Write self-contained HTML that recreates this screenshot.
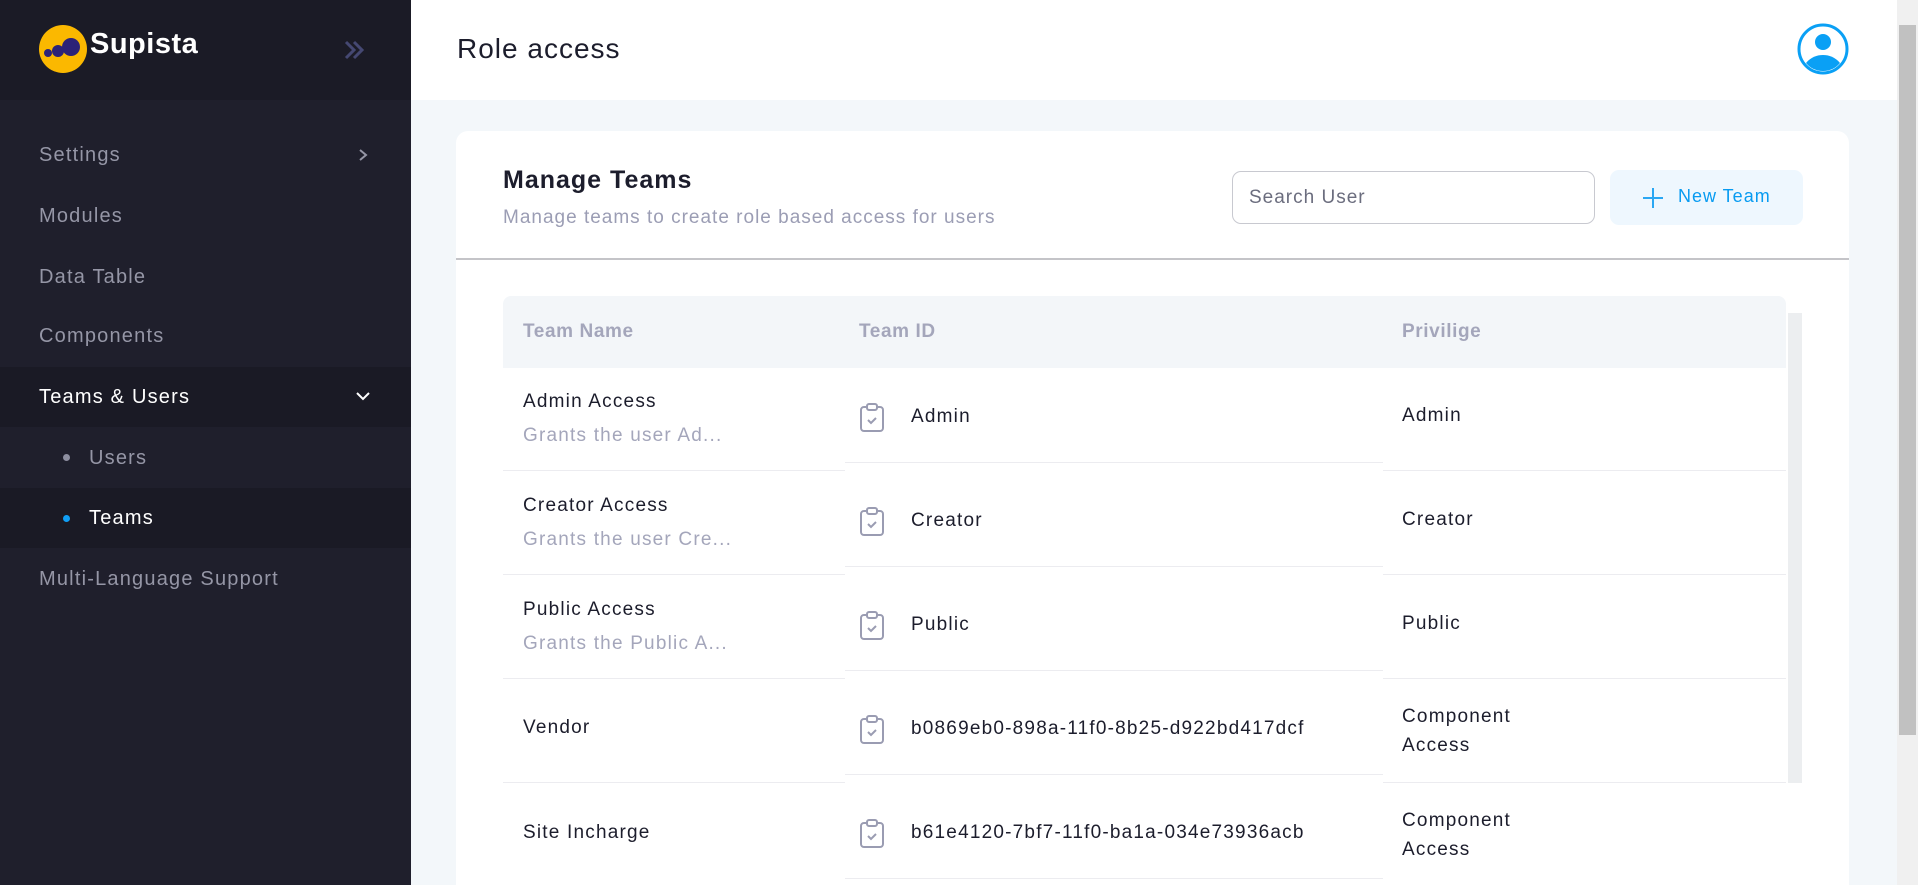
<!DOCTYPE html>
<html><head><meta charset="utf-8"><style>
*{box-sizing:border-box;margin:0;padding:0}
html{overflow:hidden;width:1918px;height:885px}
body{width:1918px;height:885px;overflow:hidden;font-family:"Liberation Sans",sans-serif;background:#f3f7fa;position:relative}
.sb{position:absolute;left:0;top:0;width:411px;height:885px;background:#1f1f2c}
.sbtop{position:absolute;left:0;top:0;width:411px;height:100px;background:#1b1b26}
.logo{position:absolute;left:39px;top:25px;width:48px;height:48px;border-radius:50%;background:#fbb800}
.brand{position:absolute;left:90px;top:28px;color:#fff;font-size:29px;font-weight:bold;letter-spacing:0.5px}
.it{position:absolute;left:39px;font-size:20px;color:#9596a6;letter-spacing:1.2px}
.band{position:absolute;left:0;width:411px;background:#1a1a25}
.main{position:absolute;left:411px;top:0;width:1486px;height:100px;background:#fff}
.card{position:absolute;left:456px;top:131px;width:1393px;height:754px;background:#fff;border-radius:12px 12px 0 0}
.abs{position:absolute}
.hl{position:absolute;height:1px;background:#ececf0}
.tn{position:absolute;font-size:19px;color:#1c1d2c;letter-spacing:1.2px}
.sub{position:absolute;font-size:19px;color:#a4a6bb;letter-spacing:1.2px}
.th{position:absolute;font-size:19px;font-weight:bold;color:#a4a6bb;letter-spacing:0.6px}
.vs{position:absolute;left:1897px;top:0;width:21px;height:885px;background:#f0f0f0}
</style></head><body>
<div class="sb"></div><div class="sbtop"></div>
<div class="logo"><svg width="48" height="48"><circle cx="9" cy="28" r="4" fill="#2c2277"/><circle cx="19" cy="26" r="6" fill="#2c2277"/><circle cx="32" cy="22" r="9" fill="#2c2277"/></svg></div>
<div class="brand">Supista</div>
<svg class="abs" style="left:343px;top:39px" width="22" height="22" viewBox="0 0 22 22"><path d="M3 3l8 8-8 8M11 3l8 8-8 8" stroke="#454872" stroke-width="3" fill="none"/></svg>
<div class="it" style="top:144px">Settings</div>
<svg class="abs" style="left:356px;top:148px" width="14" height="14"><path d="M4 2l6 5-6 5" stroke="#9596a6" stroke-width="2" fill="none"/></svg>
<div class="it" style="top:205px">Modules</div>
<div class="it" style="top:266px">Data Table</div>
<div class="it" style="top:325px">Components</div>
<div class="band" style="top:367px;height:60px"></div>
<div class="it" style="top:386px;color:#fff">Teams &amp; Users</div>
<svg class="abs" style="left:355px;top:389px" width="16" height="14"><path d="M2 4l6 6 6-6" stroke="#fff" stroke-width="2" fill="none"/></svg>
<div class="abs" style="left:63px;top:454px;width:7px;height:7px;border-radius:50%;background:#8d8ea0"></div>
<div class="it" style="top:447px;left:89px">Users</div>
<div class="band" style="top:488px;height:60px"></div>
<div class="abs" style="left:63px;top:515px;width:7px;height:7px;border-radius:50%;background:#109ef5"></div>
<div class="it" style="top:507px;left:89px;color:#fff">Teams</div>
<div class="it" style="top:568px">Multi-Language Support</div>

<div class="main"></div>
<div class="abs" style="left:457px;top:33px;font-size:28px;color:#1c1d2c;letter-spacing:1px">Role access</div>
<svg class="abs" style="left:1797px;top:23px" width="52" height="52" viewBox="0 0 52 52"><circle cx="26" cy="26" r="24" fill="#fff" stroke="#0aa0f5" stroke-width="3"/><circle cx="26" cy="19" r="8" fill="#0aa0f5"/><path d="M9 40c5-6 11-8 17-8s12 2 17 8c-4 5-10 8-17 8s-13-3-17-8z" fill="#0aa0f5"/></svg>
<div class="vs"><div style="position:absolute;left:2px;top:25px;width:17px;height:710px;background:#c1c1c1"></div></div>

<div class="card"></div>
<div class="abs" style="left:503px;top:166px;font-size:25px;font-weight:bold;color:#1c1d2c;letter-spacing:1px">Manage Teams</div>
<div class="abs" style="left:503px;top:207px;font-size:19px;color:#9b9db4;letter-spacing:1px">Manage teams to create role based access for users</div>
<div class="abs" style="left:1232px;top:171px;width:363px;height:53px;border:1px solid #c8c9d0;border-radius:9px;font-size:19px;color:#6b6d7e;padding:15px 16px;letter-spacing:1px">Search User</div>
<div class="abs" style="left:1610px;top:170px;width:193px;height:55px;background:#eef7fe;border-radius:9px"></div>
<svg class="abs" style="left:1642px;top:187px" width="22" height="22"><path d="M11 1v20M1 11h20" stroke="#2aa7f3" stroke-width="2"/></svg>
<div class="abs" style="left:1678px;top:186px;font-size:18px;color:#079bf1;letter-spacing:1px">New Team</div>
<div class="abs" style="left:456px;top:258px;width:1393px;height:2px;background:#c4c4c8"></div>

<div class="abs" style="left:503px;top:296px;width:1283px;height:72px;background:#f3f6f9;border-radius:8px 8px 0 0"></div>
<div class="th" style="left:523px;top:321px">Team Name</div>
<div class="th" style="left:859px;top:321px">Team ID</div>
<div class="th" style="left:1402px;top:321px">Privilige</div>
<div class="abs" style="left:1788px;top:313px;width:14px;height:470px;background:#eceef0"></div>

<div class="hl" style="left:503px;top:470px;width:342px"></div><div class="hl" style="left:845px;top:462px;width:538px"></div><div class="hl" style="left:1383px;top:470px;width:403px"></div>
<div class="hl" style="left:503px;top:574px;width:342px"></div><div class="hl" style="left:845px;top:566px;width:538px"></div><div class="hl" style="left:1383px;top:574px;width:403px"></div>
<div class="hl" style="left:503px;top:678px;width:342px"></div><div class="hl" style="left:845px;top:670px;width:538px"></div><div class="hl" style="left:1383px;top:678px;width:403px"></div>
<div class="hl" style="left:503px;top:782px;width:342px"></div><div class="hl" style="left:845px;top:774px;width:538px"></div><div class="hl" style="left:1383px;top:782px;width:403px"></div>
<div class="hl" style="left:845px;top:878px;width:538px"></div>

<div class="tn" style="left:523px;top:391px">Admin Access</div><div class="sub" style="left:523px;top:425px">Grants the user Ad...</div>
<div class="tn" style="left:911px;top:406px">Admin</div><div class="tn" style="left:1402px;top:405px">Admin</div>
<div class="tn" style="left:523px;top:495px">Creator Access</div><div class="sub" style="left:523px;top:529px">Grants the user Cre...</div>
<div class="tn" style="left:911px;top:510px">Creator</div><div class="tn" style="left:1402px;top:509px">Creator</div>
<div class="tn" style="left:523px;top:599px">Public Access</div><div class="sub" style="left:523px;top:633px">Grants the Public A...</div>
<div class="tn" style="left:911px;top:614px">Public</div><div class="tn" style="left:1402px;top:613px">Public</div>
<div class="tn" style="left:523px;top:717px">Vendor</div>
<div class="tn" style="left:911px;top:718px">b0869eb0-898a-11f0-8b25-d922bd417dcf</div>
<div class="tn" style="left:1402px;top:702px;line-height:29px">Component<br>Access</div>
<div class="tn" style="left:523px;top:822px">Site Incharge</div>
<div class="tn" style="left:911px;top:822px">b61e4120-7bf7-11f0-ba1a-034e73936acb</div>
<div class="tn" style="left:1402px;top:806px;line-height:29px">Component<br>Access</div>

<svg class="abs" style="left:859px;top:403px" width="26" height="30" viewBox="0 0 26 30"><g id="cb" fill="none" stroke="#9a9cb2" stroke-width="2"><rect x="2" y="4" width="22" height="24" rx="3"/><rect x="8" y="1" width="10" height="6" rx="2" fill="#fff"/><path d="M9 17l3 3 5-5"/></g></svg>
<svg class="abs" style="left:859px;top:507px" width="26" height="30" viewBox="0 0 26 30"><use href="#cb"/></svg>
<svg class="abs" style="left:859px;top:611px" width="26" height="30" viewBox="0 0 26 30"><use href="#cb"/></svg>
<svg class="abs" style="left:859px;top:715px" width="26" height="30" viewBox="0 0 26 30"><use href="#cb"/></svg>
<svg class="abs" style="left:859px;top:819px" width="26" height="30" viewBox="0 0 26 30"><use href="#cb"/></svg>
</body></html>
